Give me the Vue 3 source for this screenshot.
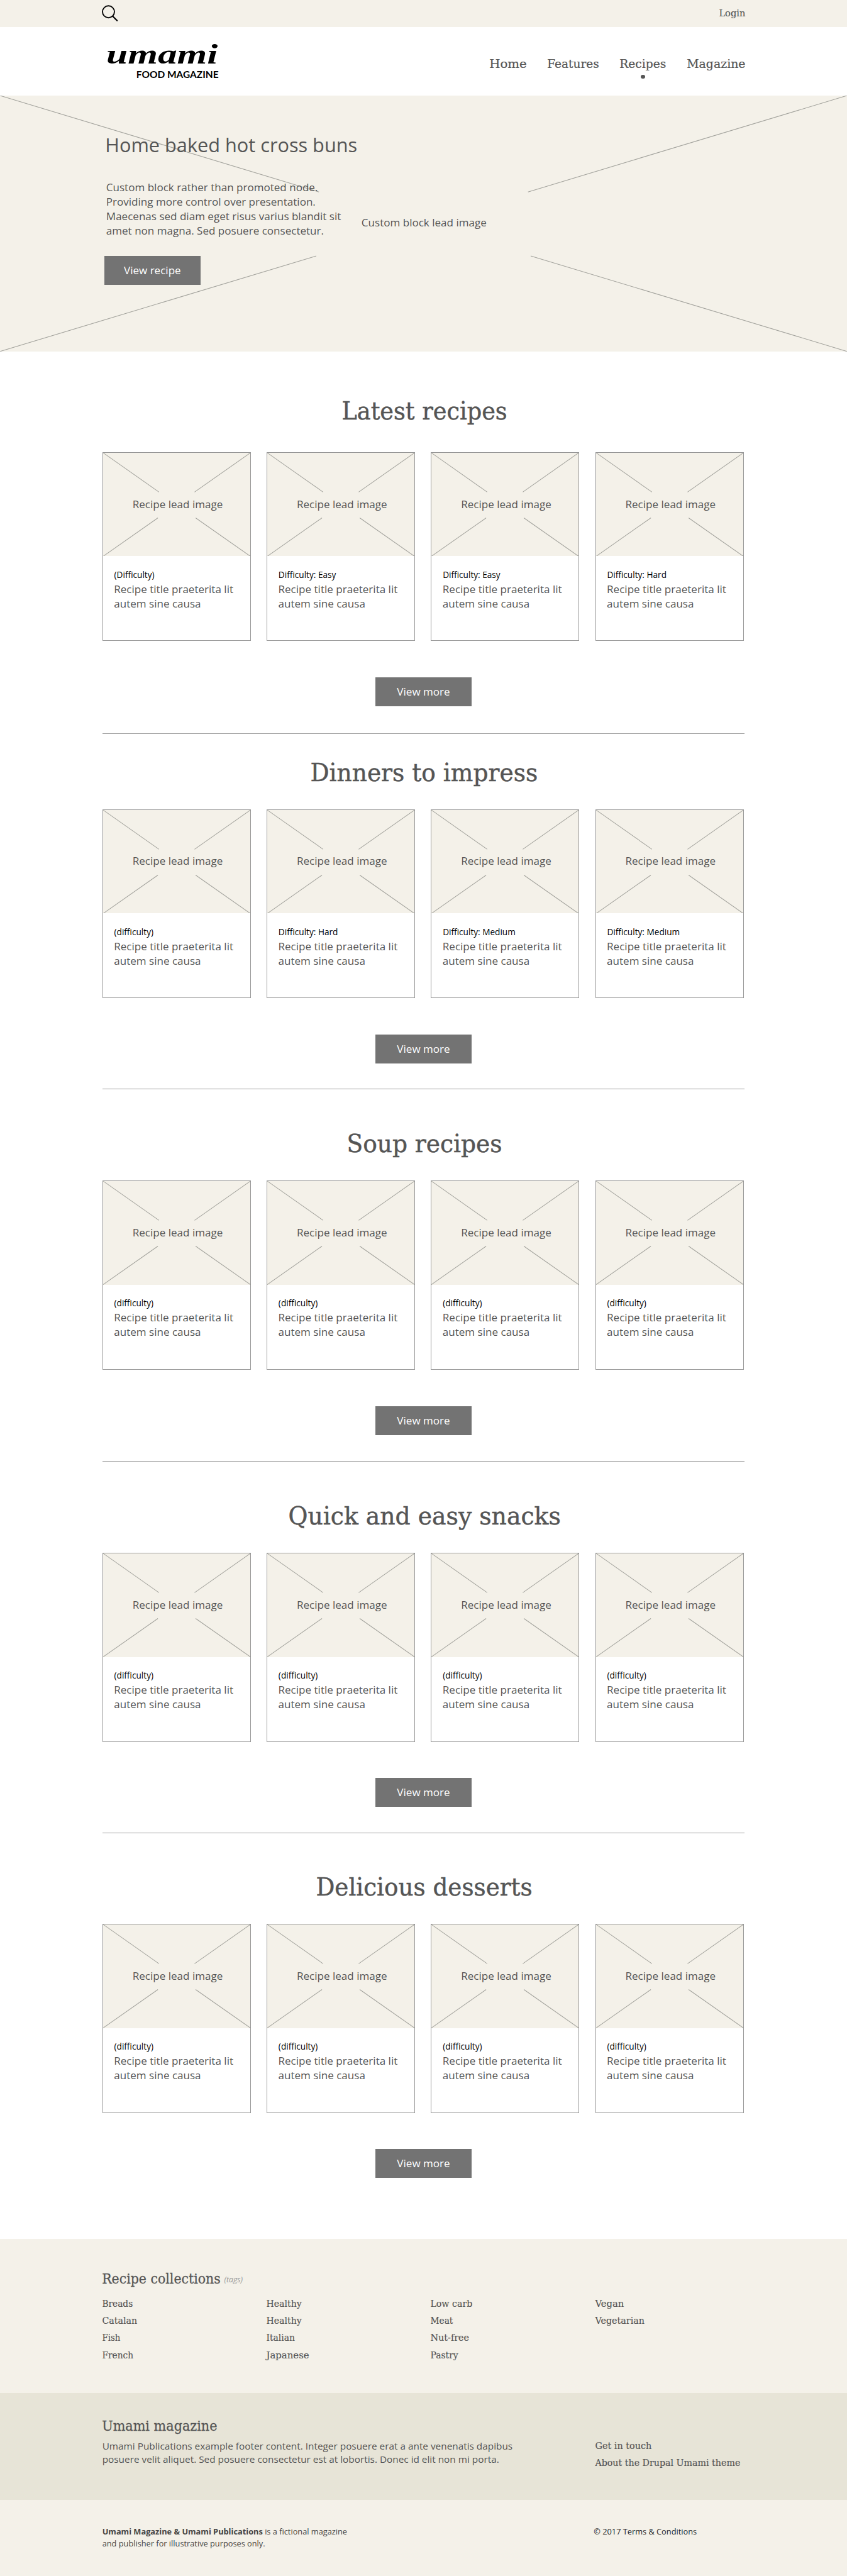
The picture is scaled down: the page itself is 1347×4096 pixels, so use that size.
<script setup>
import { h } from 'vue'

// A single line of slab text whose drawn width is fixed; its baseline is the box's bottom edge.
const FitText = (props) =>
  h('svg', { width: props.w, height: props.size, style: { display: 'block', overflow: 'visible', flex: 'none' } }, [
    h('text', {
      x: -0.04 * props.size,
      y: props.size,
      'font-size': props.size,
      textLength: props.w + 0.08 * props.size,
      lengthAdjust: 'spacingAndGlyphs',
      fill: 'currentColor',
      stroke: 'currentColor',
      'stroke-width': 0.012 * props.size
    }, props.text)
  ])
FitText.props = ['text', 'w', 'size']

const nav = [
  { text: 'Home', w: 68 },
  { text: 'Features', w: 95 },
  { text: 'Recipes', w: 85, active: true },
  { text: 'Magazine', w: 107.6 }
]

const plain = ['(difficulty)', '(difficulty)', '(difficulty)', '(difficulty)']
const sections = [
  { id: 'latest', title: 'Latest recipes', w: 305, cards: ['(Difficulty)', 'Difficulty: Easy', 'Difficulty: Easy', 'Difficulty: Hard'] },
  { id: 'dinners', title: 'Dinners to impress', w: 420.5, cards: ['(difficulty)', 'Difficulty: Hard', 'Difficulty: Medium', 'Difficulty: Medium'] },
  { id: 'soup', title: 'Soup recipes', w: 286, cards: plain },
  { id: 'snacks', title: 'Quick and easy snacks', w: 504.5, cards: plain },
  { id: 'desserts', title: 'Delicious desserts', w: 400, cards: plain }
]

const collections = [
  [['Breads', 55.8], ['Catalan', 64], ['Fish', 32.6], ['French', 57]],
  [['Healthy', 64.7], ['Healthy', 64.7], ['Italian', 52], ['Japanese', 78.6]],
  [['Low carb', 77], ['Meat', 40.8], ['Nut-free', 71], ['Pastry', 50.5]],
  [['Vegan', 52.5], ['Vegetarian', 90.8]]
]
</script>

<template>
  <div class="page">
    <div class="topbar">
      <div class="wrap topbar-row">
        <svg class="search" width="31" height="32" viewBox="0 0 31 32" fill="none" stroke="#000" stroke-width="2.2" stroke-linecap="round">
          <circle cx="12.3" cy="12.6" r="11.1" />
          <path d="M20.2 20.8 L28.4 29" stroke-width="2.6" />
        </svg>
        <FitText class="slab login" text="Login" :w="47.7" :size="17.6" />
      </div>
    </div>

    <header class="header">
      <div class="wrap header-row">
        <svg class="logo" width="212" height="72" viewBox="0 0 212 72">
          <text class="logo-script" x="0" y="44" textLength="208" lengthAdjust="spacingAndGlyphs">umami</text>
          <text class="logo-sub" x="56" y="71" textLength="153.5" lengthAdjust="spacingAndGlyphs">FOOD MAGAZINE</text>
        </svg>
        <nav class="nav slab">
          <div v-for="item in nav" :key="item.text" class="nav-item">
            <FitText :text="item.text" :w="item.w" :size="22.6" />
            <i v-if="item.active" class="dot"></i>
          </div>
        </nav>
      </div>
    </header>

    <section class="hero">
      <svg class="hero-cross" viewBox="0 0 1580 477" preserveAspectRatio="none" fill="none" stroke="#a2a29c" stroke-width="1.3">
        <path d="M0 0 L595 179.6 M1580 0 L985 179.6 M0 477 L590 299 M1580 477 L990 299" />
      </svg>
      <div class="hero-label">Custom block lead image</div>
      <div class="wrap hero-copy">
        <h1>Home baked hot cross buns</h1>
        <p>
          Custom block rather than promoted node.<br />
          Providing more control over presentation.<br />
          Maecenas sed diam eget risus varius blandit sit<br />
          amet non magna. Sed posuere consectetur.
        </p>
        <a class="button">View recipe</a>
      </div>
    </section>

    <main class="wrap">
      <section v-for="s in sections" :key="s.id" class="block" :class="s.id">
        <h2 class="slab"><FitText :text="s.title" :w="s.w" :size="46" /></h2>
        <div class="cards">
          <article v-for="(level, i) in s.cards" :key="i" class="card">
            <div class="thumb">
              <svg viewBox="0 0 277 194" preserveAspectRatio="none" fill="none" stroke="#a2a29c" stroke-width="1.2">
                <path d="M0 0 L105 73.5 M277 0 L172 73.5 M0 194 L103 122 M277 194 L174 122" />
              </svg>
              <span>Recipe lead image</span>
            </div>
            <div class="level">{{ level }}</div>
            <div class="name">Recipe title praeterita lit<br />autem sine causa</div>
          </article>
        </div>
        <a class="button">View more</a>
      </section>
    </main>

    <footer>
      <div class="collections">
        <div class="wrap">
          <div class="collections-head slab">
            <FitText text="Recipe collections" :w="219.2" :size="25.4" />
            <em>(tags)</em>
          </div>
          <div class="columns slab">
            <div v-for="(col, i) in collections" :key="i" class="links">
              <FitText v-for="(link, j) in col" :key="j" :text="link[0]" :w="link[1]" :size="17.2" />
            </div>
          </div>
        </div>
      </div>
      <div class="about">
        <div class="wrap about-row">
          <div class="about-copy">
            <FitText class="slab" text="Umami magazine" :w="213" :size="25.4" />
            <p>
              Umami Publications example footer content. Integer posuere erat a ante venenatis dapibus<br />
              posuere velit aliquet. Sed posuere consectetur est at lobortis. Donec id elit non mi porta.
            </p>
          </div>
          <div class="links slab">
            <FitText text="Get in touch" :w="104" :size="17.2" />
            <FitText text="About the Drupal Umami theme" :w="269.4" :size="17.2" />
          </div>
        </div>
      </div>
      <div class="legal">
        <div class="wrap legal-row">
          <p><b>Umami Magazine &amp; Umami Publications</b> is a fictional magazine<br />and publisher for illustrative purposes only.</p>
          <p class="terms">© 2017 Terms &amp; Conditions</p>
        </div>
      </div>
    </footer>
  </div>
</template>

<style>
html,
body {
  margin: 0;
  background: #fff;
}
</style>

<style scoped>
.page {
  zoom: 0.8528;
  height: 4803px;
  overflow: hidden;
  background: #fff;
  color: #555;
  font-family: 'Open Sans', 'Noto Sans', sans-serif;
  font-size: 20px;
  line-height: 27px;
}
.slab {
  font-family: 'DejaVu Serif', 'Liberation Serif', serif;
}
.wrap {
  width: 1198px;
  margin: 0 auto;
}
h1,
h2,
p {
  margin: 0;
  font-weight: 400;
}

.topbar {
  height: 50px;
  background: #f4f1e9;
}
.topbar-row {
  display: flex;
  justify-content: space-between;
}
.search {
  margin: 9px 0 0 -1px;
}
.login {
  margin-top: 12.7px;
}

.header {
  height: 128px;
}
.header-row {
  display: flex;
  justify-content: space-between;
}
.logo {
  margin: 24px 0 0 7px;
  overflow: visible;
}
.logo-script {
  font: italic 700 53px 'Liberation Serif', serif;
}
.logo-sub {
  font: 700 17.6px Lato, sans-serif;
}
.nav {
  display: flex;
  gap: 39.8px;
  padding-top: 54.4px;
}
.nav-item {
  display: flex;
  flex-direction: column;
  align-items: center;
}
.dot {
  width: 8px;
  height: 8px;
  margin-top: 12px;
  border-radius: 50%;
  background: #555;
}

.hero {
  display: grid;
  height: 477px;
  background: #f4f1e9;
}
.hero > * {
  grid-area: 1 / 1;
}
.hero-cross {
  width: 100%;
  height: 477px;
}
.hero-label {
  justify-self: center;
  margin: 222.7px 0 0 2px;
}
.hero-copy {
  padding-top: 68px;
}
.hero-copy h1 {
  margin-left: 5.5px;
  font-size: 36px;
  line-height: 48px;
}
.hero-copy p {
  margin: 41px 0 0 7.2px;
}
.hero-copy .button {
  margin: 34px 0 0 3.4px;
}
.button {
  display: block;
  width: 180px;
  height: 54px;
  background: #737373;
  color: #fff;
  line-height: 53px;
  text-align: center;
}

.block {
  display: flex;
  flex-direction: column;
  align-items: center;
  border-bottom: 1px solid #999;
}
.block h2 {
  height: 47px;
  display: flex;
  align-items: flex-end;
  padding-left: 3px;
}
.block .button {
  margin-top: 67.5px;
}
.latest {
  padding: 80px 0 50px;
}
.latest .cards {
  margin-top: 61px;
}
.dinners {
  padding: 41px 0 47.5px;
}
.soup {
  padding: 70.7px 0 48px;
}
.snacks {
  padding: 71.3px 0 48px;
}
.desserts {
  padding: 69.2px 0 113.3px;
  border-bottom: 0;
}
.cards {
  display: grid;
  grid-template-columns: repeat(4, 277px);
  gap: 29.4px;
  align-self: flex-start;
  margin-top: 52.5px;
}
.card {
  box-sizing: border-box;
  height: 352.5px;
  border: 1px solid #979797;
}
.thumb {
  display: grid;
  height: 193px;
  background: #f4f1e9;
}
.thumb > * {
  grid-area: 1 / 1;
}
.thumb svg {
  width: 100%;
  height: 193px;
}
.thumb span {
  justify-self: center;
  margin: 81.7px 0 0 4px;
}
.level {
  padding: 24px 0 0 21px;
  color: #000;
  font-size: 16px;
  line-height: 22px;
}
.name {
  margin-top: 1.5px;
  padding-left: 20.6px;
}

.collections {
  height: 287px;
  background: #f4f1e9;
}
.collections-head {
  display: flex;
  align-items: flex-end;
  gap: 8px;
  padding-top: 57px;
}
.collections-head em {
  height: 14px;
  color: #999;
  font-family: 'Open Sans', sans-serif;
  font-size: 14.4px;
  line-height: 17px;
}
.columns {
  display: grid;
  grid-template-columns: repeat(4, 306.5px);
  margin-top: 26.4px;
}
.links {
  display: flex;
  flex-direction: column;
  gap: 14.8px;
}
.about {
  height: 200px;
  background: #e7e4d7;
}
.about-row,
.legal-row {
  display: flex;
}
.about-copy {
  width: 919.5px;
  padding-top: 44.4px;
}
.about-copy p {
  margin-top: 17.5px;
  font-size: 18px;
  line-height: 24px;
}
.about .links {
  padding-top: 86.8px;
}
.legal {
  height: 142px;
  background: #f4f1e9;
}
.legal-row p {
  width: 916.5px;
  padding-top: 47.8px;
  color: #444;
  font-size: 15px;
  line-height: 22.5px;
}
.legal-row .terms {
  width: auto;
  color: #222;
}
</style>
